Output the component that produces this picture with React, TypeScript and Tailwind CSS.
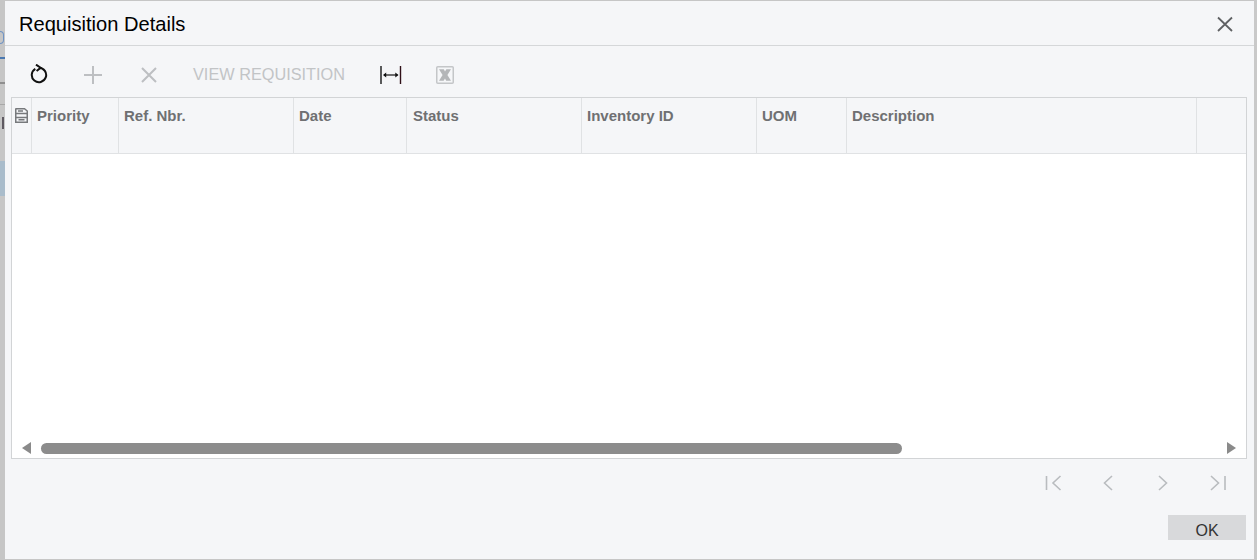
const columns = [
  { label: 'Priority', width: 'w-[87px]', pad: 'pl-[5px]' },
  { label: 'Ref. Nbr.', width: 'w-[175px]', pad: 'pl-[5px]' },
  { label: 'Date', width: 'w-[113px]', pad: 'pl-[5px]' },
  { label: 'Status', width: 'w-[175px]', pad: 'pl-[6px]' },
  { label: 'Inventory ID', width: 'w-[175px]', pad: 'pl-[5px]' },
  { label: 'UOM', width: 'w-[90px]', pad: 'pl-[5px]' },
  { label: 'Description', width: 'w-[350px]', pad: 'pl-[5px]' },
];

function BackdropStrip() {
  return (
    <div className="w-[5px] shrink-0 flex flex-col overflow-hidden">
      <div className="h-[31px]" />
      <div className="h-[13px] w-[4px] border-y border-r border-[#6f93c4] rounded-r-sm" />
      <div className="h-[2px] mt-[13px] w-full bg-[#4a78b0]" />
      <div className="h-[2px] mt-[23px] w-full bg-[#8f8f8f]" />
      <div className="h-[1px] mt-[20px] w-full bg-[#a8a8a8]" />
      <div className="h-[12px] mt-[12px] w-[2px] ml-[2px] bg-[#5f5a62]" />
      <div className="h-[35px] mt-[32px] w-full bg-[#a9bccb]" />
    </div>
  );
}

function ToolbarIcon({ children }: { children: React.ReactNode }) {
  return <div className="w-[55px] h-[24px] flex items-center justify-center shrink-0">{children}</div>;
}

function PagerIcon({ d }: { d: string }) {
  return (
    <div className="w-[55px] flex justify-center">
      <svg width="18" height="18" viewBox="0 0 18 18" fill="none" stroke="#b9bcbf" strokeWidth="1.6">
        <path d={d} />
      </svg>
    </div>
  );
}

export default function App() {
  return (
    <div className="w-[1257px] h-[560px] flex bg-[#c6c6c6] overflow-hidden" style={{ fontFamily: '"Liberation Sans", Arial, sans-serif' }}>
      <BackdropStrip />

      <div className="w-[1249px] h-[558px] mt-[1px] bg-[#f5f6f8] flex flex-col shrink-0">
        {/* title bar */}
        <div className="h-[45px] shrink-0 border-b border-[#d5d7d9] flex items-center justify-between pl-[14px] pr-[21px] pt-[1px]">
          <span className="text-[20.1px] leading-[24px] text-black">Requisition Details</span>
          <svg width="16" height="16" viewBox="0 0 16 16" fill="none" stroke="#5f6163" strokeWidth="1.8">
            <path d="M1 1.5 15 15M15 1.5 1 15" />
          </svg>
        </div>

        {/* toolbar */}
        <div className="h-[51px] shrink-0 flex items-center pl-[6px] pt-[6px]">
          <ToolbarIcon>
            <svg width="18" height="21" viewBox="0 0 18 21" fill="none" stroke="#111" strokeWidth="2">
              <path d="M5.3 4.8A7.2 7.2 0 1 0 9 3.8" />
              <path d="M6 .6l4.6 3.2-4 3.2" />
            </svg>
          </ToolbarIcon>
          <ToolbarIcon>
            <svg width="20" height="20" viewBox="0 0 20 20" fill="none" stroke="#bdbfc2" strokeWidth="2" className="mr-[1px]">
              <path d="M10 1v18M1 10h18" />
            </svg>
          </ToolbarIcon>
          <ToolbarIcon>
            <svg width="16" height="16" viewBox="0 0 16 16" fill="none" stroke="#bdbfc2" strokeWidth="2">
              <path d="M1 1l14 14M15 1 1 15" />
            </svg>
          </ToolbarIcon>
          <span className="ml-[17px] text-[16.3px] leading-[24px] text-[#c2c4c6] w-[175px] shrink-0 mb-[2px]">VIEW REQUISITION</span>
          <svg width="22" height="18" viewBox="0 0 22 18" fill="none" className="ml-[12px] shrink-0">
            <path d="M1 0v18" stroke="#333" strokeWidth="1.6" />
            <path d="M20.5 0v18" stroke="#301018" strokeWidth="1.4" />
            <path d="M4 9h13.5" stroke="#111" strokeWidth="1.2" />
            <path d="M3 9l3.2-2.6v5.2zM18.5 9l-3.2-2.6v5.2z" fill="#111" />
          </svg>
          <svg width="18" height="18" viewBox="0 0 18 18" fill="none" className="ml-[34px] shrink-0">
            <rect x="0.75" y="0.75" width="16.5" height="16.5" rx="1" stroke="#c4c6c8" strokeWidth="1.5" />
            <path d="M3 3.2h4.8L9 5.5l1.4-2.3H15L11.4 9 15 14.8h-4.8L9 12.4l-1.4 2.4H3L6.6 9z" fill="#b4b6b8" />
          </svg>
        </div>

        {/* grid */}
        <div className="ml-[6px] w-[1236px] h-[362px] shrink-0 border border-[#d2d4d6] bg-white flex flex-col">
          <div className="h-[56px] shrink-0 bg-[#f5f6f8] border-b border-[#e0e2e4] flex">
            <div className="w-[20px] shrink-0 border-r border-[#e0e2e4] flex justify-center pt-[10px] pr-[1px]">
              <svg width="13" height="15" viewBox="0 0 13 15" fill="none">
                <path d="M1 .75h8.5L12.25 3v11.25H.75V1z" stroke="#77797c" strokeWidth="1.5" />
                <path d="M1 5.4h11M1 9.4h11" stroke="#77797c" strokeWidth="1.5" />
                <path d="M3 3h5M3.5 11.8h6" stroke="#77797c" strokeWidth="1.4" />
              </svg>
            </div>
            {columns.map(col => (
              <div
                key={col.label}
                className={`${col.width} ${col.pad} shrink-0 border-r border-[#e0e2e4] pt-[10px] text-[15px] leading-[16px] font-bold text-[#6f7072]`}
              >
                {col.label}
              </div>
            ))}
          </div>
          <div className="flex-1" />
          {/* horizontal scrollbar */}
          <div className="h-[12px] mb-[4px] shrink-0 flex items-center pl-[10px] pr-[10px]">
            <svg width="9" height="12" viewBox="0 0 9 12" className="shrink-0">
              <path d="M9 0v12L0 6z" fill="#8a8a8a" />
            </svg>
            <div className="ml-[10px] w-[861px] h-[11px] rounded-full bg-[#8c8c8c]" />
            <svg width="9" height="12" viewBox="0 0 9 12" className="ml-auto shrink-0">
              <path d="M0 0v12l9-6z" fill="#8a8a8a" />
            </svg>
          </div>
        </div>

        {/* pager */}
        <div className="h-[47px] shrink-0 flex items-center justify-end pr-[9px]">
          <PagerIcon d="M2.5 2v14M16.5 2 9 9l7.5 7" />
          <PagerIcon d="M13 2 5.5 9l7.5 7" />
          <PagerIcon d="M5 2l7.5 7L5 16" />
          <PagerIcon d="M16 2v14M2 2l7.5 7L2 16" />
        </div>

        {/* footer */}
        <div className="flex justify-end pr-[8px] pt-[9px]">
          <button className="w-[78px] h-[25px] bg-[#d8d9db] text-[16px] leading-[25px] text-[#333] pt-[3px]">OK</button>
        </div>
      </div>

      <div className="flex-1 flex flex-col bg-[#c9c9c9]" />
    </div>
  );
}
